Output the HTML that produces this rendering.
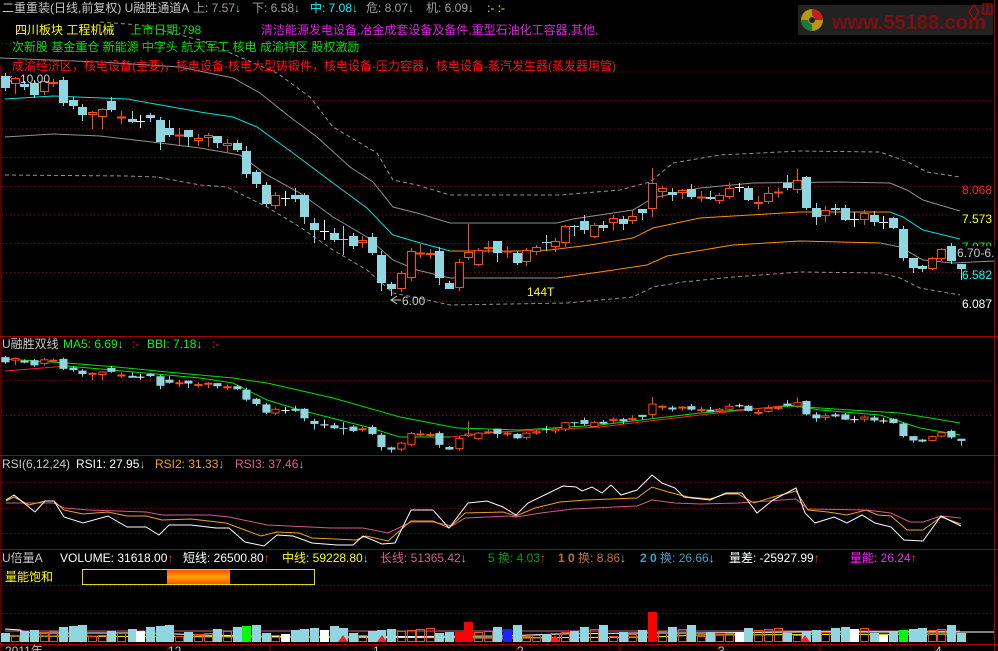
<!DOCTYPE html>
<html><head><meta charset="utf-8"><style>
html,body{margin:0;padding:0;background:#000;width:998px;height:651px;overflow:hidden}
svg{display:block}
text{font-family:"Liberation Sans","Noto Sans CJK SC",sans-serif;font-size:12px}
</style></head><body>
<svg id="s" width="998" height="651" viewBox="0 0 998 651" xmlns="http://www.w3.org/2000/svg">
<rect width="998" height="651" fill="#000"/>
<g id="grid"></g>
<g id="lines"></g>
<g id="cand"></g>
<!-- logo -->
<rect x="798" y="5" width="195" height="30" fill="#222"/>
<circle cx="812" cy="20" r="11" fill="#b8960f"/>
<path d="M812 9 A11 11 0 0 1 823 20 L815 20 A4 4 0 0 0 812 16 Z" fill="#c02020"/>
<path d="M801 20 A11 11 0 0 0 812 31 L812 24 A4 4 0 0 1 808 20 Z" fill="#1e7a3a"/>
<circle cx="812" cy="20" r="3" fill="#222"/>
<text x="832" y="29" fill="#7a1010" style="font-size:20px;font-weight:bold">www.55188.com</text>
<path d="M974 5 l5 7 -5 7 -5 -7z M983 4 h9 v10 h-9z M987 4 v10" stroke="#c00" fill="none"/>
<g id="txt">
<text x="2" y="12" fill="#c8c8c8">二重重装(日线,前复权) U融胜通道A</text>
<text x="193" y="12" fill="#a0a0a0">上: 7.57<tspan fill="#7ec8e3">↓</tspan></text>
<text x="252" y="12" fill="#a0a0a0">下: 6.58<tspan fill="#7ec8e3">↓</tspan></text>
<text x="310" y="12" fill="#00ffff">中: 7.08<tspan fill="#7ec8e3">↓</tspan></text>
<text x="366" y="12" fill="#a0a0a0">危: 8.07<tspan fill="#7ec8e3">↓</tspan></text>
<text x="426" y="12" fill="#a0a0a0">机: 6.09<tspan fill="#7ec8e3">↓</tspan></text>
<text x="487" y="12" fill="#ffff00">:- :-</text>
<text x="15" y="34" fill="#ffff00">四川板块  工程机械</text>
<text x="130" y="34" fill="#00e000">上市日期:798</text>
<text x="261" y="34" fill="#e020e0">清洁能源发电设备,冶金成套设备及备件,重型石油化工容器,其他,</text>
<text x="12" y="51" fill="#00e000">次新股 基金重仓 新能源 中字头 航天军工 核电 成渝特区 股权激励</text>
<text x="12" y="70" fill="#ff1010">成渝经济区，核电设备(主要)，核电设备-核电大型铸锻件，核电设备-压力容器，核电设备-蒸汽发生器(蒸发器用管)</text>
<text x="20" y="83" fill="#c8c8c8">10.00</text>
<text x="402" y="305" fill="#c8c8c8">6.00</text>
<path d="M397 296 l-6 4 6 4 M391 300 h10 M12 76 l-4 3 4 3" stroke="#c8c8c8" fill="none"/>
<text x="527" y="296" fill="#ffff00">144T</text>
<text x="962" y="194" fill="#ff2020">8.068</text>
<text x="962" y="223" fill="#ffff00">7.573</text>
<text x="962" y="251" fill="#00ff00">7.078</text>
<rect x="956" y="246" width="40" height="13" fill="#000"/>
<text x="957" y="257" fill="#c8c8c8">6.70-6.</text>
<text x="962" y="279" fill="#00ffff">6.582</text>
<text x="962" y="308" fill="#ffffff">6.087</text>
<text x="2" y="348" fill="#c8c8c8">U融胜双线</text>
<text x="63" y="348" fill="#00ff00">MA5: 6.69<tspan fill="#7ec8e3">↓</tspan></text>
<text x="132" y="348" fill="#ff2020">:-</text>
<text x="147" y="348" fill="#00ff00">BBI: 7.18<tspan fill="#7ec8e3">↓</tspan></text>
<text x="212" y="348" fill="#ff2020">:-</text>
<text x="2" y="468" fill="#c8c8c8">RSI(6,12,24)</text>
<text x="76" y="468" fill="#fff">RSI1: 27.95<tspan fill="#7ec8e3">↓</tspan></text>
<text x="155" y="468" fill="#f0a020">RSI2: 31.33<tspan fill="#7ec8e3">↓</tspan></text>
<text x="235" y="468" fill="#e06090">RSI3: 37.46<tspan fill="#7ec8e3">↓</tspan></text>
<text x="2" y="562" fill="#c8c8c8">U倍量A</text>
<text x="60" y="562" fill="#fff">VOLUME: 31618.00<tspan fill="#ff4010">↑</tspan></text>
<text x="183" y="562" fill="#fff">短线: 26500.80<tspan fill="#ff4010">↑</tspan></text>
<text x="282" y="562" fill="#ffff00">中线: 59228.80<tspan fill="#7ec8e3">↓</tspan></text>
<text x="380" y="562" fill="#d06090">长线: 51365.42<tspan fill="#7ec8e3">↓</tspan></text>
<text x="488" y="562" fill="#00a000">5 换: 4.03<tspan fill="#ff4010">↑</tspan></text>
<text x="558" y="562" fill="#c07030"><tspan font-weight="bold">1 0</tspan> 换: 8.86<tspan fill="#7ec8e3">↓</tspan></text>
<text x="640" y="562" fill="#40a0c0"><tspan font-weight="bold">2 0</tspan> 换: 26.66<tspan fill="#7ec8e3">↓</tspan></text>
<text x="729" y="562" fill="#fff">量差: -25927.99<tspan fill="#ff4010">↑</tspan></text>
<text x="850" y="562" fill="#ff20ff">量能: 26.24<tspan fill="#ff4010">↑</tspan></text>
<text x="5" y="581" fill="#ffff00">量能饱和</text>
<defs><linearGradient id="gr" x1="0" y1="0" x2="0" y2="1"><stop offset="0" stop-color="#ff5000"/><stop offset="0.5" stop-color="#ffa000"/><stop offset="1" stop-color="#ff5000"/></linearGradient></defs>
<rect x="82.5" y="569.5" width="232" height="15" fill="#000" stroke="#e0e000"/>
<rect x="167" y="570" width="63" height="14" fill="url(#gr)"/>
<text x="5" y="655" fill="#c8c8c8">2011年</text>
<text x="168" y="655" fill="#c8c8c8">12</text>
<text x="373" y="655" fill="#c8c8c8">1</text>
<text x="517" y="655" fill="#c8c8c8">2</text>
<text x="718" y="655" fill="#c8c8c8">3</text>
<text x="935" y="655" fill="#c8c8c8">4</text>
</g>
</svg>
<script>
var NS="http://www.w3.org/2000/svg";
function el(p,t,a){var e=document.createElementNS(NS,t);for(var k in a)e.setAttribute(k,a[k]);document.getElementById(p).appendChild(e);return e;}
function pl(p,pts,c,dash,w){el(p,"polyline",{points:pts.map(function(q){return q.join(",")}).join(" "),fill:"none",stroke:c,"stroke-width":w||1,"stroke-dasharray":dash||""});}
[43,71.5,100,128.5,157,186,214.5,243,272,301,380,415,482,508,533,585,613].forEach(function(y){el("grid","line",{x1:2,x2:994,y1:y+.5,y2:y+.5,stroke:"#a00000","stroke-dasharray":"1,3"});});
[336.5,455.5,549.5,644.5].forEach(function(y){el("grid","line",{x1:0,x2:998,y1:y,y2:y,stroke:"#a00000"});});
el("grid","line",{x1:1,x2:1,y1:65,y2:651,stroke:"#a00000"});
el("grid","line",{x1:994.5,x2:994.5,y1:0,y2:651,stroke:"#a00000"});
[168,270,373,517,620,718,820,935].forEach(function(x){el("grid","line",{x1:x,x2:x,y1:645,y2:651,stroke:"#a00000"});});
pl("lines",[[0,58],[100,62],[180,67],[233,78],[260,93],[290,117],[317,137],[350,167],[373,182],[393,207],[417,213],[450,223],[557,223],[573,219],[633,210],[653,198],[667,195],[700,188],[753,183],[840,182],[890,183],[907,190],[923,200],[960,211]],"#909090");
pl("lines",[[100,22],[140,25],[200,40],[277,73],[310,97],[333,127],[377,153],[393,180],[417,185],[450,195],[560,195],[620,190],[650,182],[673,163],[720,155],[800,151],[880,152],[908,162],[927,172],[960,177]],"#909090","4,3");
pl("lines",[[5,99],[53,96],[127,99],[200,112],[233,117],[257,127],[293,153],[333,183],[367,208],[393,235],[417,242],[450,251]],"#00e0e0");
pl("lines",[[450,251],[527,251],[550,250],[590,245],[633,238],[653,228],[700,218],[800,212],[890,212]],"#ff9000");
pl("lines",[[890,212],[903,217],[923,230],[960,239]],"#00e0e0");
pl("lines",[[5,137],[53,134],[100,136],[160,143],[200,148],[240,155],[267,175],[300,193],[333,217],[367,237],[393,260],[417,270],[450,278],[557,278]],"#909090");
pl("lines",[[557,278],[600,272],[647,265],[667,256],[733,245],[800,241],[880,243]],"#ff9000");
pl("lines",[[880,243],[900,247],[923,260],[953,263],[994,261]],"#909090");
pl("lines",[[5,175],[127,176],[157,177],[200,185],[227,187],[267,207],[300,227],[333,250],[367,270],[393,293],[423,299],[450,305],[567,303],[633,297],[653,287],[683,282],[733,277],[800,272],[880,273],[900,278],[920,288],[960,295]],"#909090","4,3");
pl("lines",[[5,359],[67,363],[117,367],[167,372],[233,378],[267,383],[333,398],[400,417],[457,428],[520,430],[600,425],[700,413],[790,406],[850,410],[900,413],[960,423]],"#00e000");
pl("lines",[[5,371],[67,366]],"#ff2020");
pl("lines",[[67,366],[200,378],[233,383],[267,400],[300,410],[367,427],[400,437],[450,437]],"#00e000");
pl("lines",[[450,437],[500,432],[600,427],[700,415],[790,405]],"#ff2020");
pl("lines",[[790,405],[820,410],[880,415],[920,428],[960,435]],"#00e000");
pl("lines",[[6,503],[25,503],[54,503],[64,508],[89,510],[146,512],[162,515],[210,515],[229,517],[267,525],[331,528],[363,528],[388,533],[411,522],[433,522],[452,526],[465,518],[509,516],[516,517],[541,513],[573,509],[637,506],[652,500],[675,503],[700,504],[738,503],[796,499],[808,509],[866,510],[891,513],[910,522],[923,522],[941,516],[961,518]],"#d05a90");
pl("lines",[[6,501],[14,497],[29,505],[45,501],[54,501],[64,510],[83,514],[108,512],[127,516],[146,516],[162,520],[191,519],[226,523],[245,530],[261,536],[277,532],[299,533],[312,538],[356,540],[366,536],[388,541],[411,521],[433,521],[449,528],[465,513],[503,512],[516,516],[535,508],[560,502],[586,500],[611,499],[637,498],[652,487],[668,492],[688,497],[710,499],[726,494],[738,494],[754,503],[773,497],[796,491],[808,510],[828,512],[847,515],[866,510],[878,515],[891,516],[907,530],[923,530],[941,517],[961,524]],"#f0a020");
pl("lines",[[6,500],[14,495],[35,512],[45,501],[54,501],[64,517],[83,523],[108,516],[127,527],[146,527],[159,535],[169,525],[191,525],[216,528],[229,528],[245,542],[264,546],[277,535],[293,536],[312,543],[337,545],[353,545],[363,536],[382,544],[395,543],[411,510],[433,510],[449,528],[468,503],[487,501],[503,507],[516,515],[528,503],[563,486],[576,487],[582,491],[592,487],[602,493],[611,485],[621,495],[637,490],[652,475],[662,483],[675,488],[684,497],[710,500],[726,493],[742,493],[757,513],[773,500],[796,488],[805,513],[815,523],[834,517],[847,523],[862,515],[875,523],[891,527],[904,540],[923,541],[941,516],[961,526]],"#ffffff");
pl("lines",[[5,629],[20,630],[30,633],[150,633],[200,635],[300,637],[500,636],[560,634],[640,633],[700,633],[800,632],[994,632]],"#ffffff");
pl("lines",[[5,631],[150,631],[960,631]],"#d06090");
pl("lines",[[5,636],[300,637],[500,638],[652,637],[700,635],[960,634]],"#ffff00");
var C=[[5,'c',76,88],[15,'r',78,84,77,94],[24,'c',84,87],[34,'c',83,95],[44,'r',81,92],[53,'r',82,84],[63,'c',80,103],[73,'c',100,106],[82,'c',107,115,104,121],[92,'r',112,115,111,129],[102,'r',109,117,108,129],[111,'c',101,110,97,112],[121,'rx',117,118,111,124],[132,'c',119,122,111,123],[140,'w',121,122,115,128],[150,'c',115,118,113,122],[160,'c',120,142,117,150],[169,'c',128,135,120,137],[179,'rx',135,137,128,145],[188,'c',130,137,130,147],[198,'r',138,141,134,146],[208,'r',135,138,133,147],[217,'c',136,143,136,148],[227,'r',143,146,139,152],[237,'c',143,150,140,152],[246,'c',151,174,146,178],[256,'c',172,184,170,188],[266,'c',185,204],[275,'r',195,206],[285,'w',198,199,191,206],[295,'c',195,199,188,202],[304,'c',195,217,193,224],[314,'c',223,230,218,243],[324,'w',231,232,220,240],[334,'c',233,240,228,242],[343,'cx',239,242,226,255],[353,'c',236,246],[362,'r',240,243,236,248],[372,'c',237,253,233,255],[381,'c',255,283,251,291],[391,'c',284,289,282,296],[401,'r',273,289,271,292],[411,'r',251,278],[420,'rx',253,254,244,258],[430,'r',253,255,249,259],[439,'c',251,278,247,285],[449,'c',283,289,281,289],[459,'r',262,288],[468,'r',252,258,224,260],[478,'r',250,265,248,266],[488,'r',247,249,241,253],[497,'c',241,253,241,262],[507,'rx',251,252,246,258],[517,'c',253,263,251,265],[526,'r',250,262,248,266],[536,'r',247,252,245,255],[546,'cx',242,243,235,251],[555,'r',241,247,238,252],[565,'r',226,243,225,247],[574,'cx',226,227,225,236],[584,'c',221,230,215,234],[594,'r',225,237,223,238],[603,'c',225,228,221,231],[613,'r',218,223,215,230],[623,'c',219,224,216,230],[632,'r',216,221,210,224],[642,'c',209,213,209,220],[652,'r',183,209,168,217],[662,'r',188,192,186,198],[672,'c',192,195,188,201],[682,'r',190,193,189,199],[691,'c',189,197,184,199],[701,'rx',197,199,191,202],[710,'c',197,199,191,200],[719,'r',195,201,193,204],[729,'r',188,197,183,199],[739,'w',187,188,183,192],[748,'c',188,200,186,201],[758,'r',202,204,196,209],[768,'r',193,202,187,204],[778,'rx',192,193,188,198],[787,'c',183,188,175,190],[797,'r',180,190,169,193],[806,'c',177,208,176,210],[816,'c',208,217,203,225],[825,'r',210,216,206,222],[835,'c',208,210,204,215],[845,'c',208,220,205,221],[854,'w',219,220,212,227],[864,'r',213,220,210,225],[874,'c',215,222,211,226],[883,'w',222,223,216,229],[893,'c',218,228,217,229],[903,'c',229,258],[913,'c',258,268,258,273],[922,'c',266,269,265,272],[932,'r',258,269,257,270],[941,'r',249,259,248,261],[951,'c',246,261],[961,'c',264,269,264,280]];
var cols={c:'#8fd6e0',cx:'#8fd6e0',r:'#ff4a10',rx:'#ff4a10',w:'#ffffff'};
function candle(x,k,t,b,h,l,s){
 var col=cols[k];
 el("cand","line",{x1:x+.5,x2:x+.5,y1:h,y2:l,stroke:col});
 if(k=='w'||k=='rx'||k=='cx'){el("cand","line",{x1:x-4*s,x2:x+5*s,y1:t+.5,y2:t+.5,stroke:col,"stroke-width":(k=='rx'?2:1)});return;}
 var hh=Math.max(b-t,2);
 if(k=='c')el("cand","rect",{x:x-4*s,y:t,width:9*s,height:hh,fill:col});
 else el("cand","rect",{x:x-3.5*s,y:t+.5,width:8*s,height:hh-1,fill:"#000",stroke:col});
}
C.forEach(function(c){
 var h=c[4]!==undefined?c[4]:c[2]-3,l=c[5]!==undefined?c[5]:c[3]+3;
 candle(c[0],c[1],c[2],c[3],h,l,1);
 var m=function(y){return 358+(y-78)*0.434;};
 candle(c[0],c[1],m(c[2]),Math.max(m(c[3]),m(c[2])+2),m(h),m(l),0.9);
});
var specialH={459:10,468:20,652:30};
C.forEach(function(c,i){
 var x=c[0];var hgt=6+((i*37)%9);
 if(c[1]=='c')hgt+=3;
 if(specialH[x])hgt=specialH[x];
 var col=cols[c[1]];
 if(x==246||x==903)col='#00ff00';
 if(x==507)col='#2020ff';
 if(specialH[x]||x==246||x==903||x==507||c[1]=='c'||c[1]=='cx'||c[1]=='w'){
  el("cand","rect",{x:x-4,y:642-hgt,width:9,height:hgt,fill:(specialH[x]?'#ff0000':(c[1]=='w'?'#fff':col))});
 } else {
  el("cand","rect",{x:x-3.5,y:642.5-hgt,width:8,height:hgt-1,fill:"none",stroke:col});
 }
});
[[343,642],[382,642],[555,642],[805,642]].forEach(function(p){el("cand","path",{d:"M"+(p[0]-5)+" "+p[1]+" l5 -7 5 7z",fill:"#ff2020"});});
</script>
</body></html>
